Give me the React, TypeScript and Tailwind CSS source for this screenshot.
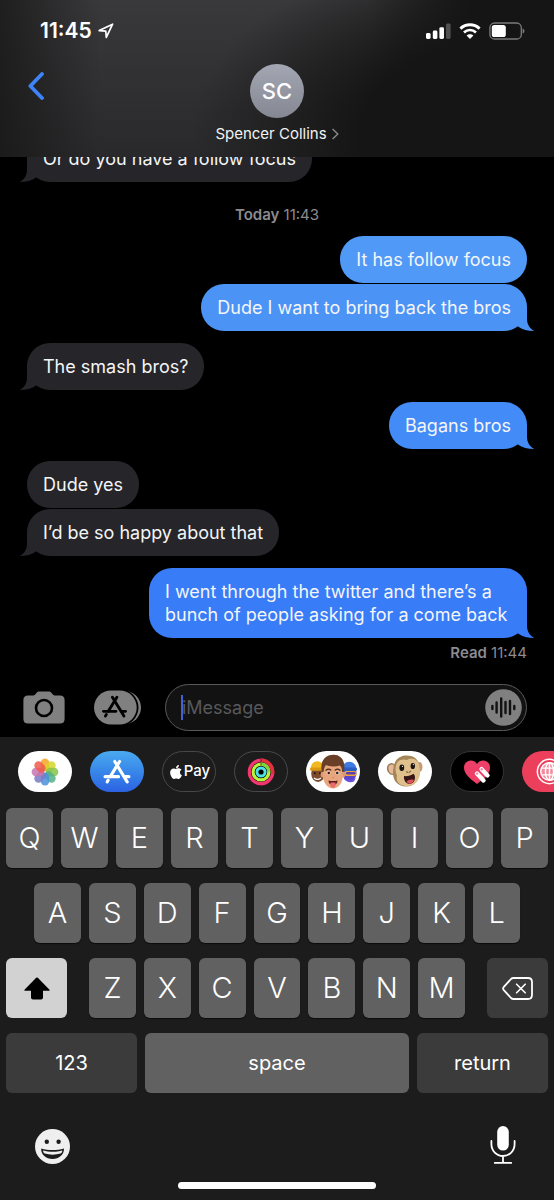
import { ReactNode, useState } from "react";
import { clsx } from "clsx";
import { FaApple } from "react-icons/fa";

// Define types
interface Message {
    id: number;
    text: string;
    sent: boolean;
    tail: boolean;
    color: string;
}

// Bubble colors get deeper towards the bottom of the thread
const messages: Message[] = [
    { id: 1, text: "It has follow focus", sent: true, tail: false, color: "bg-[#5099f6]" },
    { id: 2, text: "Dude I want to bring back the bros", sent: true, tail: true, color: "bg-[#4b94f6] text-[#4b94f6]" },
    { id: 3, text: "The smash bros?", sent: false, tail: true, color: "bg-[#262529] text-[#262529]" },
    { id: 4, text: "Bagans bros", sent: true, tail: true, color: "bg-[#438bf7] text-[#438bf7]" },
    { id: 5, text: "Dude yes", sent: false, tail: false, color: "bg-[#262529]" },
    { id: 6, text: "I’d be so happy about that", sent: false, tail: true, color: "bg-[#262529] text-[#262529]" },
    {
        id: 7,
        text: "I went through the twitter and there’s a bunch of people asking for a come back",
        sent: true,
        tail: true,
        color: "bg-[#387cf7] text-[#387cf7]",
    },
];

const earlier: Message = {
    id: 0,
    text: "Or do you have a follow focus",
    sent: false,
    tail: true,
    color: "bg-[#262529] text-[#262529]",
};

function Bubble({ message }: { message: Message }) {
    return (
        <div
            className={clsx(
                "relative max-w-[378px] shrink-0 rounded-[23px] px-4 py-3",
                message.color,
                message.sent ? "self-end" : "self-start"
            )}
        >
            {message.tail && (
                <svg
                    viewBox="0 0 24 24"
                    fill="currentColor"
                    className={clsx(
                        "absolute bottom-0 size-6",
                        message.sent ? "-right-2" : "-left-2 -scale-x-100"
                    )}
                >
                    <path d="M16 0V12C16 17 18.500 21.500 23.3 24C17 24 11 22.500 7 19.500L0 8V0Z" />
                </svg>
            )}
            <p className="relative text-[18px] leading-[23px] text-[#f4f5f7]">{message.text}</p>
        </div>
    );
}

function StatusBar() {
    return (
        <div className="flex h-[22px] items-center justify-between pr-[29px] pl-10">
            <div className="flex items-center gap-1.5">
                <span className="text-[21px] leading-[22px] font-semibold text-white">11:45</span>
                <svg viewBox="0 0 16 16" className="size-4" fill="none" stroke="#fff" strokeWidth="1.7" strokeLinejoin="round">
                    <path d="M1.2 7.6L14.6 1.2L8.3 14.4L7.8 8.2Z" />
                </svg>
            </div>
            <div className="flex items-center gap-2">
                <svg viewBox="0 0 26 16" className="h-4 w-[26px]" fill="#fff">
                    <rect x="1" y="10" width="4.6" height="6" rx="1.4" />
                    <rect x="7.8" y="7.6" width="4.6" height="8.4" rx="1.4" />
                    <rect x="14.4" y="4.2" width="4.6" height="11.8" rx="1.4" />
                    <rect x="21" y="0.4" width="4.6" height="15.6" rx="1.4" opacity="0.25" />
                </svg>
                <svg viewBox="0 0 22 16" className="h-4 w-[22px]" fill="none" stroke="#fff" strokeWidth="3">
                    <path d="M1.4 5.6C7 .6 15 .6 20.6 5.6" />
                    <path d="M5 9.4C8.4 6.2 13.6 6.2 17 9.4" strokeWidth="2.7" />
                    <path d="M11 16L7.6 12.6C9.4 10.9 12.6 10.9 14.4 12.6Z" fill="#fff" stroke="none" />
                </svg>
                <svg viewBox="0 0 36 18" className="h-[18px] w-9">
                    <rect x="0.9" y="1" width="31.4" height="16" rx="4.6" fill="none" stroke="#7b7b7d" strokeWidth="1.3" />
                    <rect x="2.8" y="3" width="14" height="12" rx="2.6" fill="#fff" />
                    <path d="M33.6 6.4C36 7.4 36 10.6 33.6 11.6Z" fill="#7b7b7d" />
                </svg>
            </div>
        </div>
    );
}

function Header() {
    return (
        <header className="relative z-10 shrink-0 bg-[linear-gradient(to_right,#161616c0,#16161600_18%),linear-gradient(to_left,#151515_15%,#15151500_33%),radial-gradient(ellipse_340px_190px_at_96%_85%,#151515_50%,#15151500_100%),linear-gradient(to_bottom,#39393b,#29292b)] pt-5 pb-[13px]">
            <StatusBar />
            <div className="grid grid-cols-[1fr_auto_1fr] items-start pt-[22px]">
                <button aria-label="Back" className="mt-2 ml-7 w-4">
                    <svg viewBox="0 0 16 28" className="h-7 w-4" fill="none" stroke="#3f83f8" strokeWidth="3.8" strokeLinecap="round" strokeLinejoin="round">
                        <path d="M14 2L2.4 14L14 26" />
                    </svg>
                </button>
                <button className="flex flex-col items-center">
                    <span className="flex size-[54px] items-center justify-center rounded-full bg-linear-to-b from-[#a3a7b3] to-[#858892] text-[22px] font-medium text-white">
                        SC
                    </span>
                    <span className="mt-1.5 flex items-center gap-1 text-[15px] leading-5 text-[#f2f2f3]">
                        Spencer Collins
                        <svg viewBox="0 0 8 12" className="h-3 w-2" fill="none" stroke="#8a8a8e" strokeWidth="1.4">
                            <path d="M1.6 1L6.8 6L1.6 11" />
                        </svg>
                    </span>
                </button>
            </div>
        </header>
    );
}

function Thread() {
    return (
        <main className="flex min-h-0 flex-1 flex-col justify-end overflow-hidden px-[27px] pb-[22px]">
            <Bubble message={earlier} />
            <p className="shrink-0 pt-6 pb-3 text-center text-[15px] leading-[18px] text-[#8b8b90]">
                <span className="font-semibold">Today</span> 11:43
            </p>
            <div className="flex shrink-0 flex-col">
                {messages.map((message, index) => {
                    const previous = messages[index - 1];
                    const grouped = previous && previous.sent === message.sent;
                    return (
                        <div
                            key={message.id}
                            className={clsx("flex flex-col", previous && (grouped ? "mt-px" : "mt-3"))}
                        >
                            <Bubble message={message} />
                        </div>
                    );
                })}
            </div>
            <p className="shrink-0 pt-1.5 text-right text-[15px] leading-[18px] text-[#8b8b90]">
                <span className="font-semibold">Read</span> 11:44
            </p>
        </main>
    );
}

function StoreGlyph({ className }: { className: string }) {
    return (
        <svg viewBox="0 0 81 75" className={className} fill="none" stroke="currentColor" strokeWidth="9" strokeLinecap="round">
            <path d="M48 7L21 51" />
            <path d="M34 7L70 66" />
            <path d="M6 51H45M63 51H75" />
            <path d="M15 61L12 66" />
        </svg>
    );
}

function Composer() {
    const [text, setText] = useState("");

    return (
        <div className="flex shrink-0 items-center pr-[27px] pb-1.5 pl-[23px]">
            <button aria-label="Camera">
                <svg viewBox="0 0 42 33" className="h-[33px] w-[42px]">
                    <path d="M5 4.6H9.5C11 4.6 12 3.8 13 2.4C14 1 15 .4 16.5 .4H25.500C27 .4 28 1 29 2.400C30 3.800 31 4.600 32.500 4.600H37C40 4.600 41.600 6.200 41.600 9.200V28C41.600 31 40 32.500 37 32.500H5C2 32.500 .4 31 .4 28V9.200C.4 6.200 2 4.600 5 4.600Z" fill="#808080" />
                    <circle cx="21" cy="17" r="8" fill="none" stroke="#000" strokeWidth="2.600" />
                </svg>
            </button>
            <button aria-label="Apps" className="relative ml-[29px] flex h-[35px] w-[47px] text-black">
                <svg viewBox="0 0 47 35" className="h-[35px] w-[47px]">
                    <rect x="4" y="1" width="43" height="33" rx="16.500" fill="#808080" />
                    <rect x="-2" y="-1" width="46.500" height="37" rx="18.500" fill="#000" />
                    <rect x="0" y="0.500" width="42.700" height="34" rx="17" fill="#808080" />
                </svg>
                <StoreGlyph className="absolute top-[5px] left-[7px] h-6 w-[27px]" />
            </button>
            <div className="relative ml-6 flex h-[47px] min-w-0 flex-1 items-center rounded-full border border-[#59595b] bg-[#121213] pr-1 pl-4">
                <span className="absolute left-[15px] h-[25px] w-0.5 bg-[#3f62d8]" />
                <input
                    type="text"
                    aria-label="iMessage"
                    value={text}
                    onChange={(e) => setText(e.target.value)}
                    placeholder="iMessage"
                    className="min-w-0 flex-1 bg-transparent text-[18px] leading-6 text-white outline-none placeholder:text-[#58585b]"
                />
                <button aria-label="Record audio">
                    <svg viewBox="0 0 37 37" className="size-[37px]">
                        <circle cx="18.500" cy="18.500" r="18.300" fill="#808080" />
                        <path d="M7.400 17V20M11.600 13.500V23.500M16.200 9.500V27.500M20.500 13V24M25 12V25M29.300 17V20" stroke="#121213" strokeWidth="2.400" strokeLinecap="round" />
                    </svg>
                </button>
            </div>
        </div>
    );
}

const petals = [
    { angle: 0, color: "#f5a623" },
    { angle: 45, color: "#d5d62c" },
    { angle: 90, color: "#86c34a" },
    { angle: 135, color: "#4fb286" },
    { angle: 180, color: "#4a90d9" },
    { angle: 225, color: "#7a79c9" },
    { angle: 270, color: "#c774b0" },
    { angle: 315, color: "#ee5a4a" },
];

function PhotosIcon() {
    return (
        <svg viewBox="0 0 28 28" className="size-7">
            {petals.map((petal) => (
                <rect
                    key={petal.angle}
                    x="9.800"
                    y="0.6"
                    width="8.400"
                    height="12.600"
                    rx="4.200"
                    fill={petal.color}
                    opacity="0.85"
                    transform={`rotate(${petal.angle} 14 14)`}
                />
            ))}
        </svg>
    );
}

function ActivityIcon() {
    return (
        <svg viewBox="0 0 28 28" className="size-7" fill="none">
            <circle cx="14" cy="14" r="13.500" fill="#000" />
            <circle cx="14" cy="14" r="11.700" stroke="#f0366e" strokeWidth="3.400" />
            <path d="M14 2.300A11.700 11.700 0 0 1 25.500 16" stroke="#e0313c" strokeWidth="3.400" />
            <circle cx="14" cy="14" r="7.900" stroke="#b6f43c" strokeWidth="3.200" />
            <path d="M14 6.100A7.900 7.900 0 0 1 21.900 14" stroke="#7ed83c" strokeWidth="3.200" />
            <circle cx="14" cy="14" r="4.100" stroke="#4fe0e6" strokeWidth="3" />
            <path d="M14 1.200V4M14 5V7.400" stroke="#4d1018" strokeWidth="0.800" />
        </svg>
    );
}

function MemojiIcon() {
    return (
        <svg viewBox="0 0 54 41" className="h-[41px] w-[54px]">
            {/* left friend */}
            <ellipse cx="12" cy="22.500" rx="6.800" ry="8.400" fill="#7d4a2c" />
            <path d="M4.600 18.500C4.600 7.500 17 8 19 17.500Z" fill="#f2b81f" />
            <rect x="4" y="16.600" width="14" height="3.200" rx="1.600" fill="#d99a12" />
            <circle cx="8.800" cy="22.300" r="1" fill="#21120b" />
            <circle cx="14" cy="22.300" r="1" fill="#21120b" />
            <path d="M8 27C10 28.600 13 28.600 15 27" stroke="#fff" strokeWidth="1.200" fill="none" />
            {/* right friend */}
            <ellipse cx="43.500" cy="22" rx="7" ry="8.600" fill="#5947c9" />
            <path d="M36 19C36 8 50.500 8 50.500 19Z" fill="#3f7be0" />
            <rect x="35.500" y="16.500" width="15.500" height="3.400" rx="1.700" fill="#2b5fc4" />
            <rect x="38" y="20" width="12.600" height="5" rx="2.500" fill="#f0a43a" />
            <rect x="40" y="21" width="9.500" height="2.600" rx="1.300" fill="#5b3fae" />
            <path d="M38 26.500C42 30 47 29.500 50 26.500L48 30.500C45 32 41 31.500 38 28Z" fill="#6b4fe0" />
            {/* middle face */}
            <ellipse cx="16.600" cy="23.500" rx="2" ry="3" fill="#dd9873" />
            <ellipse cx="37.200" cy="23.500" rx="2" ry="3" fill="#dd9873" />
            <path d="M17 17C17 10 36.800 10 36.800 17V25C36.800 32 32 37.500 27 37.500C22 37.500 17 32 17 25Z" fill="#e8a67e" />
            <path d="M15.800 20.500C13.500 9 20.500 3.600 27.500 3.800C35 3.600 40 10 38 20.500L36 21C36.200 18 35.500 16 33.800 14.500C28 16.500 22 15 20 14C18.400 16 17.800 18 17.600 21Z" fill="#694027" />
            <path d="M20 19.200C21.500 18 23.500 18 24.800 19M29.200 19C30.500 18 32.500 18 34 19.200" stroke="#4c2a18" strokeWidth="1.300" fill="none" strokeLinecap="round" />
            <ellipse cx="22.500" cy="22" rx="1.900" ry="1.600" fill="#fff" />
            <ellipse cx="31.500" cy="22" rx="1.900" ry="1.600" fill="#fff" />
            <circle cx="22.700" cy="22" r="1.300" fill="#2c1b14" />
            <circle cx="31.300" cy="22" r="1.300" fill="#2c1b14" />
            <path d="M26 26.200C26.600 26.800 27.600 26.800 28.200 26.200" stroke="#c97f5b" fill="none" />
            <path d="M22.500 29.500C25 30.200 29 30.200 31.500 29.500C31.500 32 30 34 27 34C24 34 22.500 32 22.500 29.500Z" fill="#5e1c1c" />
            <path d="M24.500 31.500H29.500V34.500C29.500 37.500 24.500 37.500 24.500 34.500Z" fill="#ea6a70" />
        </svg>
    );
}

function MonkeyIcon() {
    return (
        <svg viewBox="0 0 38 35" className="h-[35px] w-[38px]">
            <ellipse cx="5.800" cy="15" rx="4.800" ry="6" fill="#9b7d55" transform="rotate(-15 5.800 15)" />
            <ellipse cx="6" cy="15.200" rx="3.400" ry="4.600" fill="#e6b99a" transform="rotate(-15 6 15.200)" />
            <ellipse cx="33.500" cy="13" rx="3" ry="5" fill="#c79b78" />
            <path d="M19 1.500C28.500 .5 34.500 7 34 16C34 25 29 32.500 20 32.500C12 32.500 6.500 27 7 18C7.300 8.500 11 2.400 19 1.500Z" fill="#a48658" />
            <path d="M21 6C25 3 33.500 5 33.500 13C34.800 19 34 31.500 22 32C14 32 9.500 28 11 21.500C8.500 17 9 7.500 14.500 6C17.500 5 19.600 5.400 21 6Z" fill="#dfc08d" />
            <ellipse cx="15.800" cy="13.800" rx="2.400" ry="3.200" fill="#191411" />
            <ellipse cx="26.800" cy="12" rx="2.200" ry="3.100" fill="#191411" />
            <circle cx="16.400" cy="12.300" r="0.600" fill="#fff" />
            <circle cx="27.300" cy="10.600" r="0.600" fill="#fff" />
            <path d="M20.500 17.800L22 18.600M24.500 17L23.600 18.200" stroke="#7d5b3d" strokeWidth="1.100" strokeLinecap="round" />
            <path d="M18 22C21 22.600 25 21.500 27.500 19.800C30 22 29.500 28.500 25 29.800C20.500 31 17.500 26.500 18 22Z" fill="#351515" />
            <path d="M20.500 27.500C22 25.600 26 25 28 26C27 28.500 26 29.500 24.600 29.800C23 30 21.400 29 20.500 27.500Z" fill="#d9545b" />
        </svg>
    );
}

function HeartTouchIcon() {
    return (
        <svg viewBox="0 0 28 26" className="h-[26px] w-7">
            <path d="M14 25C6 19 1 14.500 1 8.500C1 1 10.500-.8 14 5C17.500-.8 27 1 27 8.500C27 14.500 22 19 14 25Z" fill="#ee3f68" />
            <path d="M14 14.500L20.500 21.500M18.600 10.200L24.500 16.500" stroke="#fff" strokeWidth="4.400" strokeLinecap="round" />
            <path d="M16 12L22.800 19.400" stroke="#ee3f68" strokeWidth="0.900" />
            <circle cx="14.100" cy="14.600" r="1.200" fill="#f28aa2" />
            <circle cx="18.700" cy="10.300" r="1.200" fill="#f28aa2" />
        </svg>
    );
}

function GlobeIcon() {
    return (
        <svg viewBox="0 0 24 24" className="size-[27px]" fill="none" stroke="#fff" strokeWidth="1.300">
            <circle cx="12" cy="12" r="10.800" />
            <circle cx="12" cy="12" r="7.800" fill="#f48a9b" />
            <ellipse cx="12" cy="12" rx="3.600" ry="7.800" />
            <path d="M12 4.200V19.800M4.800 9H19.200M4.800 15H19.200" />
        </svg>
    );
}

interface StripApp {
    name: string;
    style: string;
    icon: ReactNode;
}

const stripApps: StripApp[] = [
    { name: "Photos", style: "bg-white", icon: <PhotosIcon /> },
    {
        name: "App Store",
        style: "bg-linear-to-b from-[#4aa9ee] to-[#2d62e3] text-white",
        icon: <StoreGlyph className="h-[26px] w-7" />,
    },
    {
        name: "Apple Pay",
        style: "border border-[#4b4746] text-white",
        icon: (
            <span className="flex items-center text-[15px] font-medium">
                <FaApple className="size-4" />
                Pay
            </span>
        ),
    },
    { name: "Activity", style: "border border-[#4a4a4d]", icon: <ActivityIcon /> },
    { name: "Memoji", style: "bg-white", icon: <MemojiIcon /> },
    { name: "Animoji", style: "bg-white", icon: <MonkeyIcon /> },
    { name: "Digital Touch", style: "border border-[#343436] bg-black", icon: <HeartTouchIcon /> },
    { name: "Images", style: "bg-[#ec3f5c]", icon: <GlobeIcon /> },
];

function Key({ letter }: { letter: string }) {
    return (
        <button className="h-[60px] min-w-0 flex-1 rounded-md bg-[#616161] text-[29px] font-light text-white shadow-[0_1px_1px_#0c0c0c]">
            {letter}
        </button>
    );
}

function Keyboard() {
    return (
        <div className="flex shrink-0 flex-col gap-[15px] px-1.5 pt-4">
            <div className="flex gap-2">
                {[..."QWERTYUIOP"].map((letter) => (
                    <Key key={letter} letter={letter} />
                ))}
            </div>
            <div className="flex gap-2 px-7">
                {[..."ASDFGHJKL"].map((letter) => (
                    <Key key={letter} letter={letter} />
                ))}
            </div>
            <div className="flex gap-[22px]">
                <button aria-label="Shift" className="flex w-[61px] items-center justify-center rounded-md bg-[#d2d2d2]">
                    <svg viewBox="0 0 26 23" className="h-[23px] w-[26px]">
                        <path d="M12.200 .8Q13 .1 13.800 .8L25.300 12.400Q26.200 13.600 24.800 13.800H19V20.600Q19 22.600 17 22.600H9Q7 22.600 7 20.600V13.800H1.200Q-.2 13.600 .7 12.400Z" />
                    </svg>
                </button>
                <div className="flex flex-1 gap-2">
                    {[..."ZXCVBNM"].map((letter) => (
                        <Key key={letter} letter={letter} />
                    ))}
                </div>
                <button aria-label="Delete" className="flex w-[61px] items-center justify-center rounded-md bg-[#3b3b3b]">
                    <svg viewBox="0 0 31 23" className="h-[23px] w-[31px]" fill="none" stroke="#fff" strokeWidth="1.800" strokeLinejoin="round" strokeLinecap="round">
                        <path d="M11.500 1H26Q30 1 30 5V18Q30 22 26 22H11.500Q10 22 9 21L1.600 12.800Q.6 11.500 1.600 10.200L9 2Q10 1 11.500 1Z" />
                        <path d="M14.600 7.200L23.200 15.800M23.200 7.200L14.600 15.800" strokeWidth="1.600" />
                    </svg>
                </button>
            </div>
            <div className="flex h-[60px] gap-2 text-[20px] text-white">
                <button className="w-[131px] rounded-md bg-[#3b3b3b]">123</button>
                <button className="flex-1 rounded-md bg-[#616161]">space</button>
                <button className="w-[131px] rounded-md bg-[#3b3b3b]">return</button>
            </div>
        </div>
    );
}

export default function App() {
    return (
        <div className="flex h-screen flex-col overflow-hidden bg-black font-[family-name:Inter,sans-serif]">
            <Header />
            <Thread />
            <Composer />
            <footer className="shrink-0 bg-[#1c1c1c]">
                <div className="flex gap-[18px] overflow-hidden pt-3.5 pl-[18px]">
                    {stripApps.map((app) => (
                        <button
                            key={app.name}
                            aria-label={app.name}
                            className={clsx(
                                "flex h-[41px] w-[54px] shrink-0 items-center justify-center overflow-hidden rounded-full",
                                app.style
                            )}
                        >
                            {app.icon}
                        </button>
                    ))}
                </div>
                <Keyboard />
                <div className="flex items-end justify-between pt-[33px] pr-[38px] pl-[35px]">
                    <button aria-label="Emoji">
                        <svg viewBox="0 0 35 35" className="size-[35px]">
                            <circle cx="17.500" cy="17.500" r="17.500" fill="#efefef" />
                            <circle cx="11.800" cy="12.800" r="2.200" fill="#1c1c1c" />
                            <circle cx="23.600" cy="12.800" r="2.200" fill="#1c1c1c" />
                            <path d="M6.200 19.600C13 21.600 22 21.600 29 19.600C29.200 26 24 30 17.600 30C11 30 5.800 26 6.200 19.600Z" fill="#1c1c1c" />
                            <path d="M8 21.400C14 23.200 21.500 23.200 27.400 21.400C27.200 23 26.600 23.800 25.600 24.600C20.500 26 14.500 26 9.800 24.600C8.700 23.800 8.200 23 8 21.400Z" fill="#efefef" />
                        </svg>
                    </button>
                    <button aria-label="Dictate">
                        <svg viewBox="0 0 26 38" className="h-[38px] w-[26px]" fill="none" stroke="#fff" strokeWidth="1.800" strokeLinecap="round">
                            <rect x="7.200" y="0" width="11.600" height="24.600" rx="5.800" fill="#fff" stroke="none" />
                            <path d="M1.400 15V18C1.400 25 6.500 30 13 30C19.500 30 24.600 25 24.600 18V15M13 30V36.800M4.800 36.900H21.200" />
                        </svg>
                    </button>
                </div>
                <div className="mx-auto mt-[18px] mb-[11px] h-[7px] w-[198px] rounded-full bg-white" />
            </footer>
        </div>
    );
}
